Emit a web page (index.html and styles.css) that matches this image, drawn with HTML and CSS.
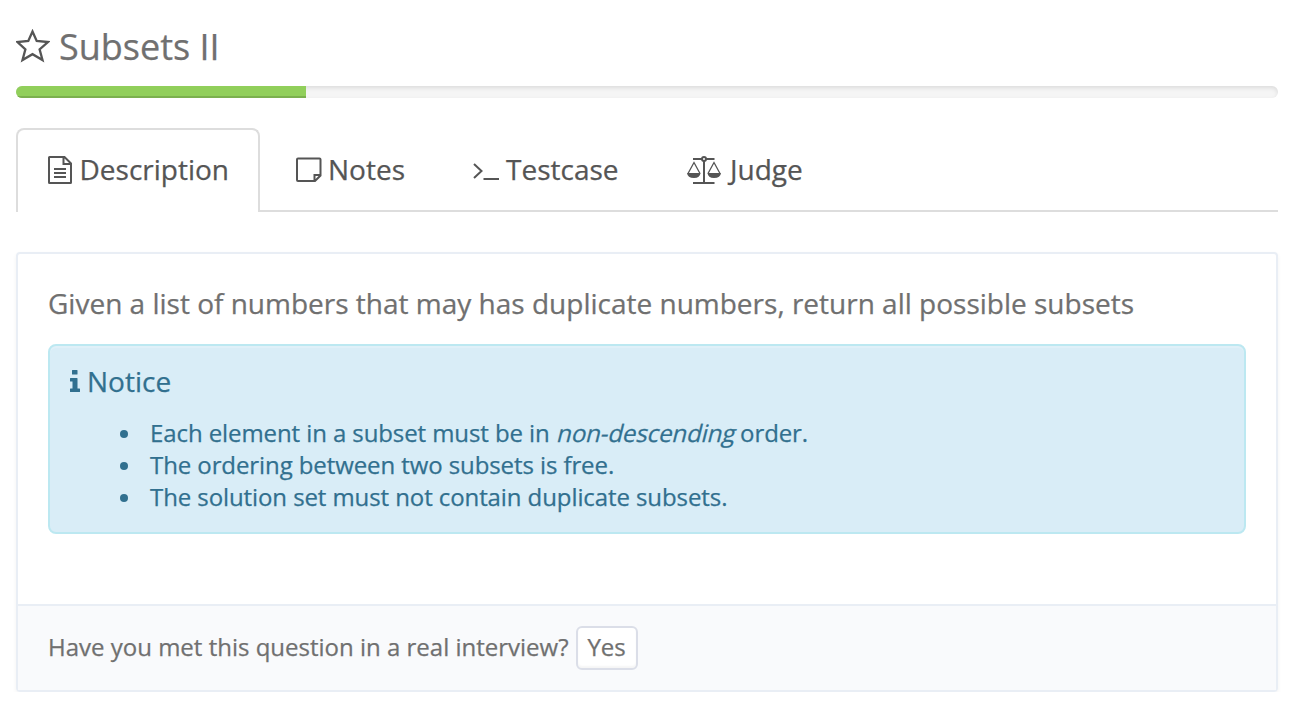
FILE: index.html
```html
<!DOCTYPE html>
<html lang="en">
<head>
<meta charset="utf-8">
<title>Subsets II</title>
<link rel="stylesheet" href="styles.css">
</head>
<body>
<main class="page">
  <h1 class="title">
    <svg class="star" width="34" height="34" viewBox="0 0 34 34"><path d="M16.5 2.500 20.700 12 32 13 23.600 20.300 26.500 31 16.500 25.200 6.500 31 9.400 20.300 1.500 13 12.300 12Z"/></svg>
    <span class="title-text">Subsets II</span>
  </h1>
  <div class="progress"><div class="progress-bar"></div></div>
  <nav class="tabs">
    <a class="tab tab-active">
      <svg class="icon" width="31.5" height="32" viewBox="0 0 31.5 32"><path d="M2 4H16.500L23 10.500V29.500Q23 30 22.500 30H1.500Q1 30 1 29.500V4.500Q1 4 1.500 4ZM15.500 4V11H22.800M6 16H18M6 20H18M6 24H18"/></svg>
      <span>Description</span>
    </a>
    <a class="tab tab-notes">
      <svg class="icon" width="32" height="32" viewBox="0 0 32 32"><path d="M2 5.500H23.500Q24.500 5.500 24.500 6.500V22.500L19 28H2Q1 28 1 27V6.500Q1 5.500 2 5.500ZM24 22H18.500V27.500"/></svg>
      <span>Notes</span>
    </a>
    <a class="tab tab-testcase">
      <svg class="icon" width="34" height="32" viewBox="0 0 34 32"><path d="M2 11 9.500 18 2 25M11.500 26H27"/></svg>
      <span>Testcase</span>
    </a>
    <a class="tab tab-judge">
      <svg class="icon" width="43" height="32" viewBox="0 0 43 32"><path d="M6 6H15M19 6H27.500M17 8V30M6 30H27.500"/><circle cx="17" cy="6" r="2"/><path class="thin" d="M1 20.500 7 9.500 13 20.500M21 20.500 27 9.500 33 20.500"/><path class="solid" d="M0 20H13.500Q13 25 7 25Q.5 25 0 20ZM20.500 20H34Q33.500 25 27 25Q21 25 20.500 20Z"/></svg>
      <span>Judge</span>
    </a>
  </nav>
  <section class="panel">
    <div class="panel-body">
      <p class="lead">Given a list of numbers that may has duplicate numbers, return all possible subsets</p>
      <div class="notice">
        <h2 class="notice-title">
          <svg class="info" width="18" height="24" viewBox="0 0 18 24"><path d="M4.500 1H9Q9.500 1 9.500 1.500V5Q9.500 5.500 9 5.500H4.500Q4 5.500 4 5V1.500Q4 1 4.500 1ZM2.500 9H9Q9.500 9 9.500 9.500V19.500H11.500Q12 19.500 12 20V22.500Q12 23 11.500 23H2.500Q2 23 2 22.500V20Q2 19.500 2.500 19.500H4.500V12.500H2.500Q2 12.500 2 12V9.500Q2 9 2.500 9Z"/></svg>
          <span>Notice</span>
        </h2>
        <ul class="rules">
          <li>Each element in a subset must be in <em>non-descending</em> order.</li>
          <li>The ordering between two subsets is free.</li>
          <li>The solution set must not contain duplicate subsets.</li>
        </ul>
      </div>
    </div>
    <footer class="panel-footer">
      <span class="question">Have you met this question in a real interview?</span>
      <button class="yes" type="button">Yes</button>
    </footer>
  </section>
</main>
</body>
</html>
```
FILE: styles.css
```css
* { box-sizing: border-box; }
body { margin: 0; background: #fff; color: #707070; font-family: "Open Sans", sans-serif; -webkit-text-stroke: .25px; }
.page { padding: 22px 22px 0 16px; }
.title { display: flex; align-items: center; height: 50px; margin: 0; font-size: 36px; font-weight: 400; line-height: 50px; }
.star { margin: 0 9px 2px 0; fill: none; stroke: #555; stroke-width: 2.3; }
.progress { height: 12px; margin-top: 14px; overflow: hidden; border-radius: 6px; background: #f5f5f5; box-shadow: inset 0 2px 4px rgba(0, 0, 0, .1); }
.progress-bar { width: 290px; height: 12px; background: #91cf5b; box-shadow: inset 0 -2px 0 #7bb04e; }
.tabs { display: flex; height: 84px; margin-top: 30px; color: #555; font-size: 28px; line-height: 40px; box-shadow: inset 0 -2px 0 #ddd; }
.tab { display: flex; align-items: flex-start; height: 84px; padding: 21px 0 0; }
.tab-active { width: 244px; padding: 19px 0 0 30px; border: 2px solid #ddd; border-bottom: 0; border-radius: 8px 8px 0 0; background: #fff; }
.tab-notes { width: 176px; padding-left: 36px; }
.tab-testcase { width: 214px; padding-left: 36px; }
.tab-judge { padding-left: 37px; }
.icon { flex: none; margin-top: 4px; fill: none; stroke: #555; stroke-width: 2; }
.icon .thin { stroke-width: 1.3; }
.icon .solid { fill: #555; stroke: none; }
.panel { height: 440px; margin-top: 40px; border: 2px solid #e9eef5; border-radius: 4px; box-shadow: 0 2px 4px rgba(0, 0, 0, .05); }
.panel-body { height: 350px; padding: 29px 30px 0; }
.lead { margin: 0 0 21px; font-size: 28px; line-height: 40px; white-space: nowrap; }
.notice { height: 190px; padding: 15px 18px; border: 2px solid #bce8f1; border-radius: 8px; background: #d9edf7; color: #31708f; box-shadow: inset 0 2px 0 rgba(255, 255, 255, .2); }
.notice-title { display: flex; align-items: center; margin: 0; font-size: 28px; font-weight: 400; line-height: 40px; }
.info { margin-right: 1px; fill: #31708f; }
.rules { margin: 16px 0 0; padding-left: 82px; font-size: 24px; line-height: 32px; letter-spacing: -.09px; list-style: none; }
.rules li::before { content: ""; display: inline-block; width: 8px; height: 8px; margin: 0 22px 0 -30px; border-radius: 50%; background: #31708f; vertical-align: 4px; }
.rules em { display: inline-block; font-style: normal; transform: skewX(-14deg); transform-origin: 0 75%; }
.panel-footer { display: flex; align-items: center; height: 86px; padding: 0 30px; border-top: 2px solid #e9eef5; background: #f9fafc; font-size: 24px; }
.question { padding-bottom: 4px; }
.yes { width: 62px; height: 44px; margin-left: 7px; padding: 0 0 4px; border: 2px solid #dbdee8; border-radius: 6px; background: #fff; box-shadow: inset 0 -2px 2px rgba(0, 0, 0, .04); color: #707070; font: 24px "Open Sans", sans-serif; }
```
